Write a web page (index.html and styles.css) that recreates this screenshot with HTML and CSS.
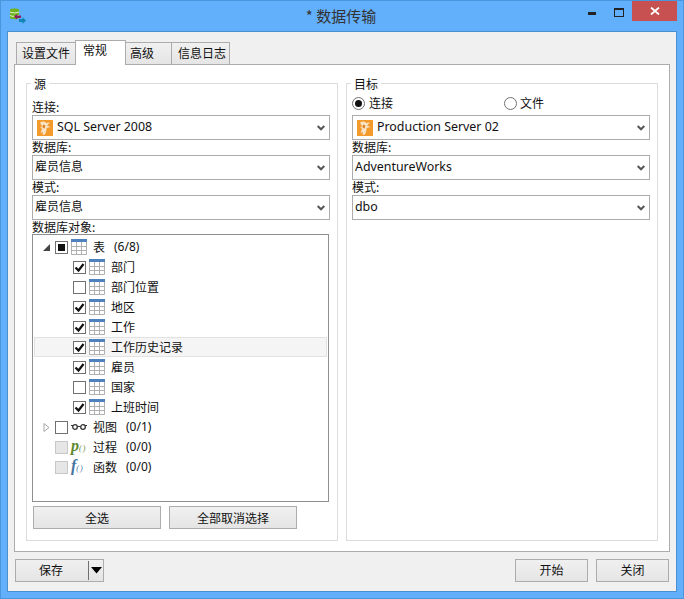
FILE: index.html
```html
<!DOCTYPE html>
<html lang="zh">
<head>
<meta charset="utf-8">
<title>数据传输</title>
<link rel="stylesheet" href="styles.css">
</head>
<body>
<svg class="defs" width="0" height="0">
  <symbol id="tbl" viewBox="0 0 16 16">
    <rect x="0" y="0" width="16" height="3" fill="#4f81bd"/>
    <path d="M.5 3v12.500h15V3M.5 7.500h15M.5 11.500h15M5.500 3v12.500M10.500 3v12.500" fill="#fff" stroke="#b0b0b0"/>
  </symbol>
  <symbol id="srv" viewBox="0 0 16 16">
    <rect width="16" height="16" fill="#f39a2b"/>
    <path d="M3 2.500c2.500-1.500 5-1 6 .5l4-.5-3 3 3.500 1.500-4 1c.3 2-.5 4-1.500 6.500l-2.500.5.500-3-2.500 1 1.500-4L3 6.500l2.500.5L3 2.500z" fill="#f9e3c6"/>
    <path d="M6 4.500l2.500 1-1 3-2-1z" fill="#d98524"/>
  </symbol>
  <symbol id="chev" viewBox="0 0 8 6">
    <path d="M.7 1l3.300 3.300L7.300 1" fill="none" stroke="#555" stroke-width="2"/>
  </symbol>
  <symbol id="chk" viewBox="0 0 13 13">
    <path d="M2.500 6.500l3 3 5-6.500" fill="none" stroke="#111" stroke-width="2.200"/>
  </symbol>
</svg>

<div class="window">
  <header class="titlebar">
    <svg class="appicon" width="28" height="24" viewBox="0 0 28 24">
      <path d="M1 3.500C1 2 10 2 10 3.500V12c0 1.500-9 1.500-9 0z" fill="#6fb321"/>
      <path d="M1 6c2 1.200 7 1.200 9 0M1 9.500c2 1.200 7 1.200 9 0" fill="none" stroke="#e6f4d0"/>
      <path d="M5 10.500l3-2.500v1.500h4v2.500H8V13.500z" fill="#8a1f63"/>
      <path d="M17 14.500l-3.500-3.500v2H10v3h3.500v2z" fill="#1287b5"/>
    </svg>
    <div class="title">* 数据传输</div>
    <div class="controls">
      <span class="min"></span>
      <span class="max"></span>
      <span class="close">
        <svg width="10" height="8" viewBox="0 0 10 8"><path d="M1 .5l8 7M9 .5l-8 7" stroke="#fff" stroke-width="1.800"/></svg>
      </span>
    </div>
  </header>

  <main class="client">
    <nav class="tabs">
      <span class="tab tab-profile">设置文件</span>
      <span class="tab tab-general active">常规</span>
      <span class="tab tab-advanced">高级</span>
      <span class="tab tab-log">信息日志</span>
    </nav>

    <section class="pane">
      <fieldset class="group group-source">
        <legend>源</legend>
        <label class="lbl lbl-first">连接:</label>
        <div class="combo"><svg class="srv" width="16" height="16"><use href="#srv"/></svg><span class="val">SQL Server 2008</span><svg class="chev" width="8" height="6"><use href="#chev"/></svg></div>
        <label class="lbl">数据库:</label>
        <div class="combo"><span class="val val-cjk">雇员信息</span><svg class="chev" width="8" height="6"><use href="#chev"/></svg></div>
        <label class="lbl">模式:</label>
        <div class="combo"><span class="val val-cjk">雇员信息</span><svg class="chev" width="8" height="6"><use href="#chev"/></svg></div>
        <label class="lbl">数据库对象:</label>
        <div class="tree">
          <div class="row root">
            <svg class="twist" width="9" height="9" viewBox="0 0 9 9"><path d="M8 1v7H1z" fill="#444"/></svg>
            <span class="cb"><i class="partial"></i></span>
            <svg class="ico" width="16" height="16"><use href="#tbl"/></svg>
            <span class="name">表</span><span class="count">(6/8)</span>
          </div>
          <div class="row child"><span class="cb"><svg width="13" height="13"><use href="#chk"/></svg></span><svg class="ico" width="16" height="16"><use href="#tbl"/></svg><span class="name">部门</span></div>
          <div class="row child"><span class="cb"></span><svg class="ico" width="16" height="16"><use href="#tbl"/></svg><span class="name">部门位置</span></div>
          <div class="row child"><span class="cb"><svg width="13" height="13"><use href="#chk"/></svg></span><svg class="ico" width="16" height="16"><use href="#tbl"/></svg><span class="name">地区</span></div>
          <div class="row child"><span class="cb"><svg width="13" height="13"><use href="#chk"/></svg></span><svg class="ico" width="16" height="16"><use href="#tbl"/></svg><span class="name">工作</span></div>
          <div class="row child hover"><span class="cb"><svg width="13" height="13"><use href="#chk"/></svg></span><svg class="ico" width="16" height="16"><use href="#tbl"/></svg><span class="name">工作历史记录</span></div>
          <div class="row child"><span class="cb"><svg width="13" height="13"><use href="#chk"/></svg></span><svg class="ico" width="16" height="16"><use href="#tbl"/></svg><span class="name">雇员</span></div>
          <div class="row child"><span class="cb"></span><svg class="ico" width="16" height="16"><use href="#tbl"/></svg><span class="name">国家</span></div>
          <div class="row child"><span class="cb"><svg width="13" height="13"><use href="#chk"/></svg></span><svg class="ico" width="16" height="16"><use href="#tbl"/></svg><span class="name">上班时间</span></div>
          <div class="row root">
            <svg class="twist" width="9" height="9" viewBox="0 0 9 9"><path d="M2 .5l5 4-5 4z" fill="#fff" stroke="#a6a6a6"/></svg>
            <span class="cb"></span>
            <svg class="ico" width="16" height="16" viewBox="0 0 16 16"><path d="M0 6.500h2M14 6.500h2M6.500 7.500h3" stroke="#333"/><circle cx="4" cy="8" r="2.300" fill="none" stroke="#333" stroke-width="1.300"/><circle cx="12" cy="8" r="2.300" fill="none" stroke="#333" stroke-width="1.300"/></svg>
            <span class="name">视图</span><span class="count">(0/1)</span>
          </div>
          <div class="row root no-twist">
            <span class="cb off"></span>
            <span class="fn fn-p">p<small>()</small></span>
            <span class="name">过程</span><span class="count">(0/0)</span>
          </div>
          <div class="row root no-twist">
            <span class="cb off"></span>
            <span class="fn fn-f">f<small>()</small></span>
            <span class="name">函数</span><span class="count">(0/0)</span>
          </div>
        </div>
        <div class="tree-actions">
          <button class="btn btn-wide">全选</button>
          <button class="btn btn-wide">全部取消选择</button>
        </div>
      </fieldset>

      <fieldset class="group group-target">
        <legend>目标</legend>
        <div class="radios">
          <span class="radio-item radio-conn"><span class="radio on"></span>连接</span>
          <span class="radio-item"><span class="radio"></span>文件</span>
        </div>
        <div class="combo"><svg class="srv" width="16" height="16"><use href="#srv"/></svg><span class="val">Production Server 02</span><svg class="chev" width="8" height="6"><use href="#chev"/></svg></div>
        <label class="lbl">数据库:</label>
        <div class="combo"><span class="val">AdventureWorks</span><svg class="chev" width="8" height="6"><use href="#chev"/></svg></div>
        <label class="lbl">模式:</label>
        <div class="combo"><span class="val">dbo</span><svg class="chev" width="8" height="6"><use href="#chev"/></svg></div>
      </fieldset>
    </section>

    <footer class="footer">
      <div class="btn split">
        <span class="split-label">保存</span>
        <span class="split-sep"></span>
        <svg width="11" height="7" viewBox="0 0 11 7"><path d="M0 0h11L5.500 6.500z" fill="#000"/></svg>
      </div>
      <span class="spacer"></span>
      <button class="btn btn-foot">开始</button>
      <button class="btn btn-foot">关闭</button>
    </footer>
  </main>
</div>
</body>
</html>
```

FILE: styles.css
```css
* { box-sizing: border-box; }
html, body { margin: 0; padding: 0; }
body {
  width: 684px;
  height: 599px;
  overflow: hidden;
  font: 12px/16px "Noto Sans CJK SC", "Noto Sans", sans-serif;
  color: #111;
}
.defs { position: absolute; }

.window {
  width: 684px;
  height: 599px;
  display: flex;
  flex-direction: column;
  background: #62affc;
  border: 1px solid #4b95dc;
  padding: 0 6px 6px 6px;
}

.titlebar {
  height: 30px;
  flex: none;
  display: flex;
  position: relative;
  align-items: flex-start;
}
.appicon { margin-left: 2px; margin-top: 5px; flex: none; }
.title {
  position: absolute;
  left: 0;
  right: 2px;
  top: 5px;
  text-align: center;
  font-size: 15px;
  line-height: 20px;
  color: #333;
}
.controls {
  margin-left: auto;
  display: flex;
  align-items: flex-start;
  position: relative;
}
.min {
  width: 8px;
  height: 3px;
  margin-top: 11px;
  background: #222;
}
.max {
  width: 10px;
  height: 9px;
  margin: 7px 8px 0 18px;
  border: 1px solid #222;
  border-top-width: 2px;
}
.close {
  width: 45px;
  height: 20px;
  background: #c75050;
  display: flex;
  align-items: center;
  justify-content: center;
}

.client {
  flex: 1;
  display: flex;
  flex-direction: column;
  background: #f0f0f0;
  border: 1px solid #4b8fcf;
  padding: 8px 6px 8px 6px;
  min-height: 0;
}

.tabs {
  display: flex;
  align-items: flex-end;
  height: 24px;
  flex: none;
  padding-left: 2px;
  position: relative;
  z-index: 1;
}
.tab {
  height: 22px;
  border: 1px solid #acacac;
  border-bottom: 0;
  margin-left: -1px;
  padding-top: 2px;
  background: linear-gradient(#f0f0f0, #e5e5e5);
  white-space: nowrap;
}
.tab-profile { width: 60px; margin-left: 0; padding-left: 5px; }
.tab-general { width: 51px; padding-left: 7px; }
.tab-advanced { width: 47px; padding-left: 5px; border-left: 0; }
.tab-log { width: 59px; padding-left: 6px; }
.tab.active {
  height: 25px;
  margin-bottom: -1px;
  background: #fff;
  padding-top: 1px;
  position: relative;
}

.pane {
  height: 488px;
  flex: none;
  background: #fff;
  border: 1px solid #acacac;
  padding: 11px 8px 10px 11px;
  display: flex;
  gap: 8px;
}

.group {
  margin: 0;
  min-width: 0;
  width: 312px;
  border: 1px solid #dcdcdc;
  padding: 0 0 0 5px;
  display: block;
}
.group legend {
  margin-left: -1px;
  padding: 0 3px;
  line-height: 16px;
  height: 14px;
}
.lbl {
  display: block;
  height: 16px;
  line-height: 16px;
  margin-top: 0;
  white-space: nowrap;
}
.lbl-first { margin-top: 9px; }

.combo {
  width: 298px;
  height: 25px;
  border: 1px solid #acacac;
  background: #fff;
  display: flex;
  align-items: center;
  padding: 0 4px 0 2px;
  margin-bottom: -1px;
}
.srv { margin-left: 2px; margin-right: 4px; flex: none; }
.val {
  flex: 1;
  font-family: "Noto Sans", "Noto Sans CJK SC", sans-serif;
  font-size: 12.4px;
  line-height: 16px;
  margin-top: -1px;
  white-space: nowrap;
}
.val-cjk { font-size: 12px; }
.chev { flex: none; }

.tree {
  width: 297px;
  height: 268px;
  border: 1px solid #8f8f8f;
  background: #fff;
  padding: 2px 1px 0;
  margin-top: -1px;
}
.row {
  height: 20px;
  display: flex;
  align-items: center;
  white-space: nowrap;
}
.root { padding-left: 8px; }
.no-twist { padding-left: 21px; }
.child { padding-left: 39px; }
.hover {
  background: #f5f5f5;
  outline: 1px solid #e2e2e2;
  outline-offset: -1px;
}
.twist { flex: none; margin-right: 4px; margin-top: 1px; }
.cb {
  flex: none;
  width: 13px;
  height: 13px;
  border: 1px solid #707070;
  background: #fff;
  display: flex;
  align-items: center;
  justify-content: center;
}
.cb svg { flex: none; }
.cb .partial { display: block; width: 7px; height: 7px; background: #111; }
.cb.off { border-color: #c8c8c8; background: #e6e6e6; }
.ico { flex: none; margin-left: 3px; margin-top: -1px; }
.name { margin-left: 6px; }
.count { margin-left: 9px; font-family: "Noto Sans", sans-serif; }
.fn {
  flex: none;
  width: 16px;
  margin-left: 3px;
  font: italic bold 16px/16px "Liberation Serif", serif;
  text-align: left;
}
.fn small { font-size: 8px; font-weight: 400; letter-spacing: 1px; }
.fn-p { color: #5f8a2f; }
.fn-f { color: #44749f; }

.tree-actions {
  display: flex;
  gap: 8px;
  margin: 4px 0 0 1px;
}
.btn {
  font: inherit;
  color: #111;
  border: 1px solid #acacac;
  background: linear-gradient(#f0f0f0, #e5e5e5);
  padding: 0;
  height: 23px;
}
.btn-wide { width: 128px; }

.radios {
  display: flex;
  height: 16px;
  margin-top: 5px;
  margin-bottom: 4px;
  align-items: center;
}
.radio-item { display: flex; align-items: center; white-space: nowrap; }
.radio-conn { width: 152px; }
.radio-conn .radio { margin-right: 4px; }
.radio {
  width: 13px;
  height: 13px;
  border: 1px solid #707070;
  border-radius: 50%;
  background: #fff;
  margin-right: 3px;
  display: flex;
  align-items: center;
  justify-content: center;
}
.radio.on::after {
  content: "";
  width: 7px;
  height: 7px;
  border-radius: 50%;
  background: #111;
}

.footer {
  display: flex;
  gap: 8px;
  margin-top: 7px;
  margin-right: 1px;
  flex: none;
}
.spacer { flex: 1; }
.btn-foot { width: 73px; padding-bottom: 1px; }
.split {
  width: 89px;
  display: flex;
  align-items: center;
  margin-left: 1px;
}
.split-label { width: 70px; text-align: center; margin-bottom: 1px; margin-right: 2px; }
.split-sep { width: 1px; height: 19px; background: #707070; margin-right: 2px; }
```
